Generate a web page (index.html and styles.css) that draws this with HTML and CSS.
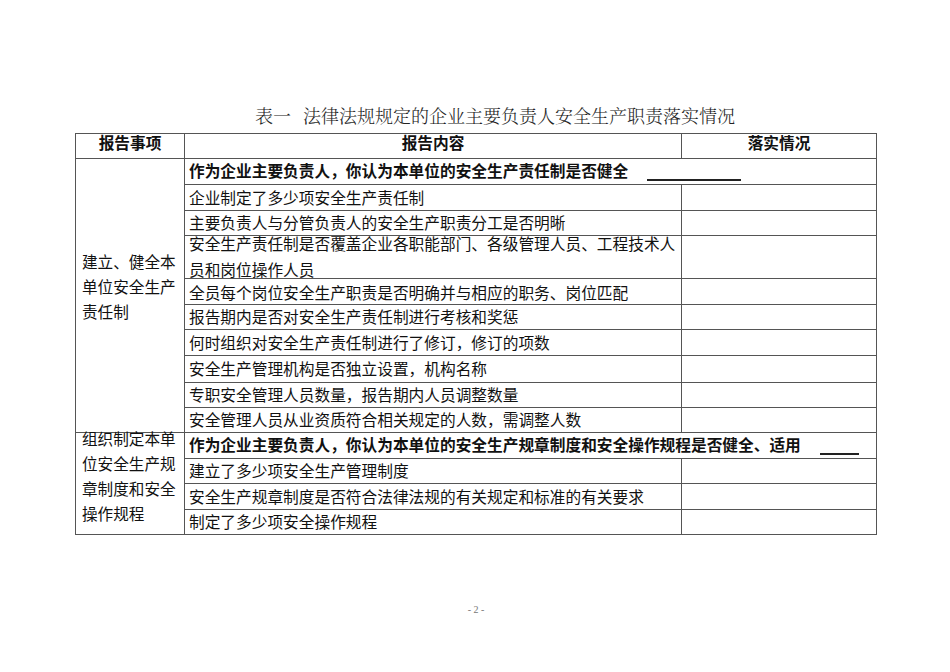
FILE: index.html
```html
<!DOCTYPE html>
<html lang="zh-CN">
<head>
<meta charset="utf-8">
<title>表一 法律法规规定的企业主要负责人安全生产职责落实情况</title>
<link rel="stylesheet" href="styles.css">
</head>
<body>
<div class="page">
  <div class="title"><span class="title-no">表一</span>法律法规规定的企业主要负责人安全生产职责落实情况</div>
  <div class="grid">
    <div class="cell head c1">报告事项</div>
    <div class="cell head c2">报告内容</div>
    <div class="cell head c3">落实情况</div>

    <div class="cell side g1"><div class="t">建立、健全本<br>单位安全生产<br>责任制</div></div>
    <div class="cell wide bold"><div class="t">作为企业主要负责人，你认为本单位的安全生产责任制是否健全<span class="blank b1"></span></div></div>
    <div class="cell c2"><div class="t">企业制定了多少项安全生产责任制</div></div><div class="cell c3"></div>
    <div class="cell c2"><div class="t">主要负责人与分管负责人的安全生产职责分工是否明晰</div></div><div class="cell c3"></div>
    <div class="cell c2"><div class="t two"><div>安全生产责任制是否覆盖企业各职能部门、各级管理人员、工程技术人</div><div>员和岗位操作人员</div></div></div><div class="cell c3"></div>
    <div class="cell c2 after-two"><div class="t">全员每个岗位安全生产职责是否明确并与相应的职务、岗位匹配</div></div><div class="cell c3"></div>
    <div class="cell c2"><div class="t">报告期内是否对安全生产责任制进行考核和奖惩</div></div><div class="cell c3"></div>
    <div class="cell c2"><div class="t">何时组织对安全生产责任制进行了修订，修订的项数</div></div><div class="cell c3"></div>
    <div class="cell c2"><div class="t">安全生产管理机构是否独立设置，机构名称</div></div><div class="cell c3"></div>
    <div class="cell c2"><div class="t">专职安全管理人员数量，报告期内人员调整数量</div></div><div class="cell c3"></div>
    <div class="cell c2"><div class="t">安全管理人员从业资质符合相关规定的人数，需调整人数</div></div><div class="cell c3"></div>

    <div class="cell side g2"><div class="t">组织制定本单<br>位安全生产规<br>章制度和安全<br>操作规程</div></div>
    <div class="cell wide bold"><div class="t">作为企业主要负责人，你认为本单位的安全生产规章制度和安全操作规程是否健全、适用<span class="blank b2"></span></div></div>
    <div class="cell c2"><div class="t">建立了多少项安全生产管理制度</div></div><div class="cell c3"></div>
    <div class="cell c2"><div class="t">安全生产规章制度是否符合法律法规的有关规定和标准的有关要求</div></div><div class="cell c3"></div>
    <div class="cell c2"><div class="t">制定了多少项安全操作规程</div></div><div class="cell c3"></div>
  </div>
  <div class="pagenum">- 2 -</div>
</div>
</body>
</html>
```

FILE: styles.css
```css
html, body {
  margin: 0;
  padding: 0;
  background: #ffffff;
}

body {
  width: 950px;
  height: 672px;
  overflow: hidden;
  font-family: "Noto Sans CJK SC", "Noto Sans", sans-serif;
  color: #111;
}

.page {
  padding: 103px 0 0 75px;
}

.title {
  height: 24px;
  line-height: 24px;
  margin: 0 0 6px 180px;
  font-family: "Noto Serif CJK SC", "Noto Sans CJK SC", serif;
  font-weight: 300;
  font-size: 18px;
  color: #222;
  white-space: nowrap;
}

.title-no {
  margin-right: 12px;
}

.grid {
  width: 802px;
  box-sizing: border-box;
  display: grid;
  grid-template-columns: 109px 497px 195px;
  grid-template-rows: 25px 26px 26px 25px 43px 26px 25px 26px 27px 25px 25px 26px 25px 26px 25px;
  border-top: 1px solid #555;
  border-left: 1px solid #555;
  font-size: 15.7px;
}

.cell {
  border-right: 1px solid #555;
  border-bottom: 1px solid #555;
  display: flex;
  align-items: center;
  min-height: 0;
  min-width: 0;
  white-space: nowrap;
  line-height: 18px;
  color: #111;
}

.t {
  line-height: 18px;
}

.two {
  display: flex;
  flex-direction: column;
  gap: 8px;
}

.after-two {
  padding-top: 3px;
}

.c1 { grid-column: 1; }
.c2 { grid-column: 2; padding-left: 4px; }
.c3 { grid-column: 3; }
.wide { grid-column: 2 / 4; padding-left: 4px; }

.head {
  font-weight: 700;
  justify-content: center;
  padding: 0 0 7px 0;
  line-height: 18px;
}

.bold {
  font-weight: 700;
}

.side {
  grid-column: 1;
  padding-left: 6px;
  font-size: 15.6px;
}

.side .t {
  line-height: 25px;
}

.g1 { grid-row: span 10; padding-bottom: 18px; }
.g2 { grid-row: span 4; padding-bottom: 15px; }

.blank {
  display: inline-block;
  height: 0;
  border-bottom: 2px solid #222;
  margin-left: 19px;
  vertical-align: -3.5px;
}

.b1 { width: 94px; }
.b2 { width: 39px; }

.pagenum {
  width: 802px;
  margin-top: 68px;
  text-align: center;
  font-family: "Liberation Serif", serif;
  font-size: 10px;
  line-height: 14px;
  color: #777;
}
```
